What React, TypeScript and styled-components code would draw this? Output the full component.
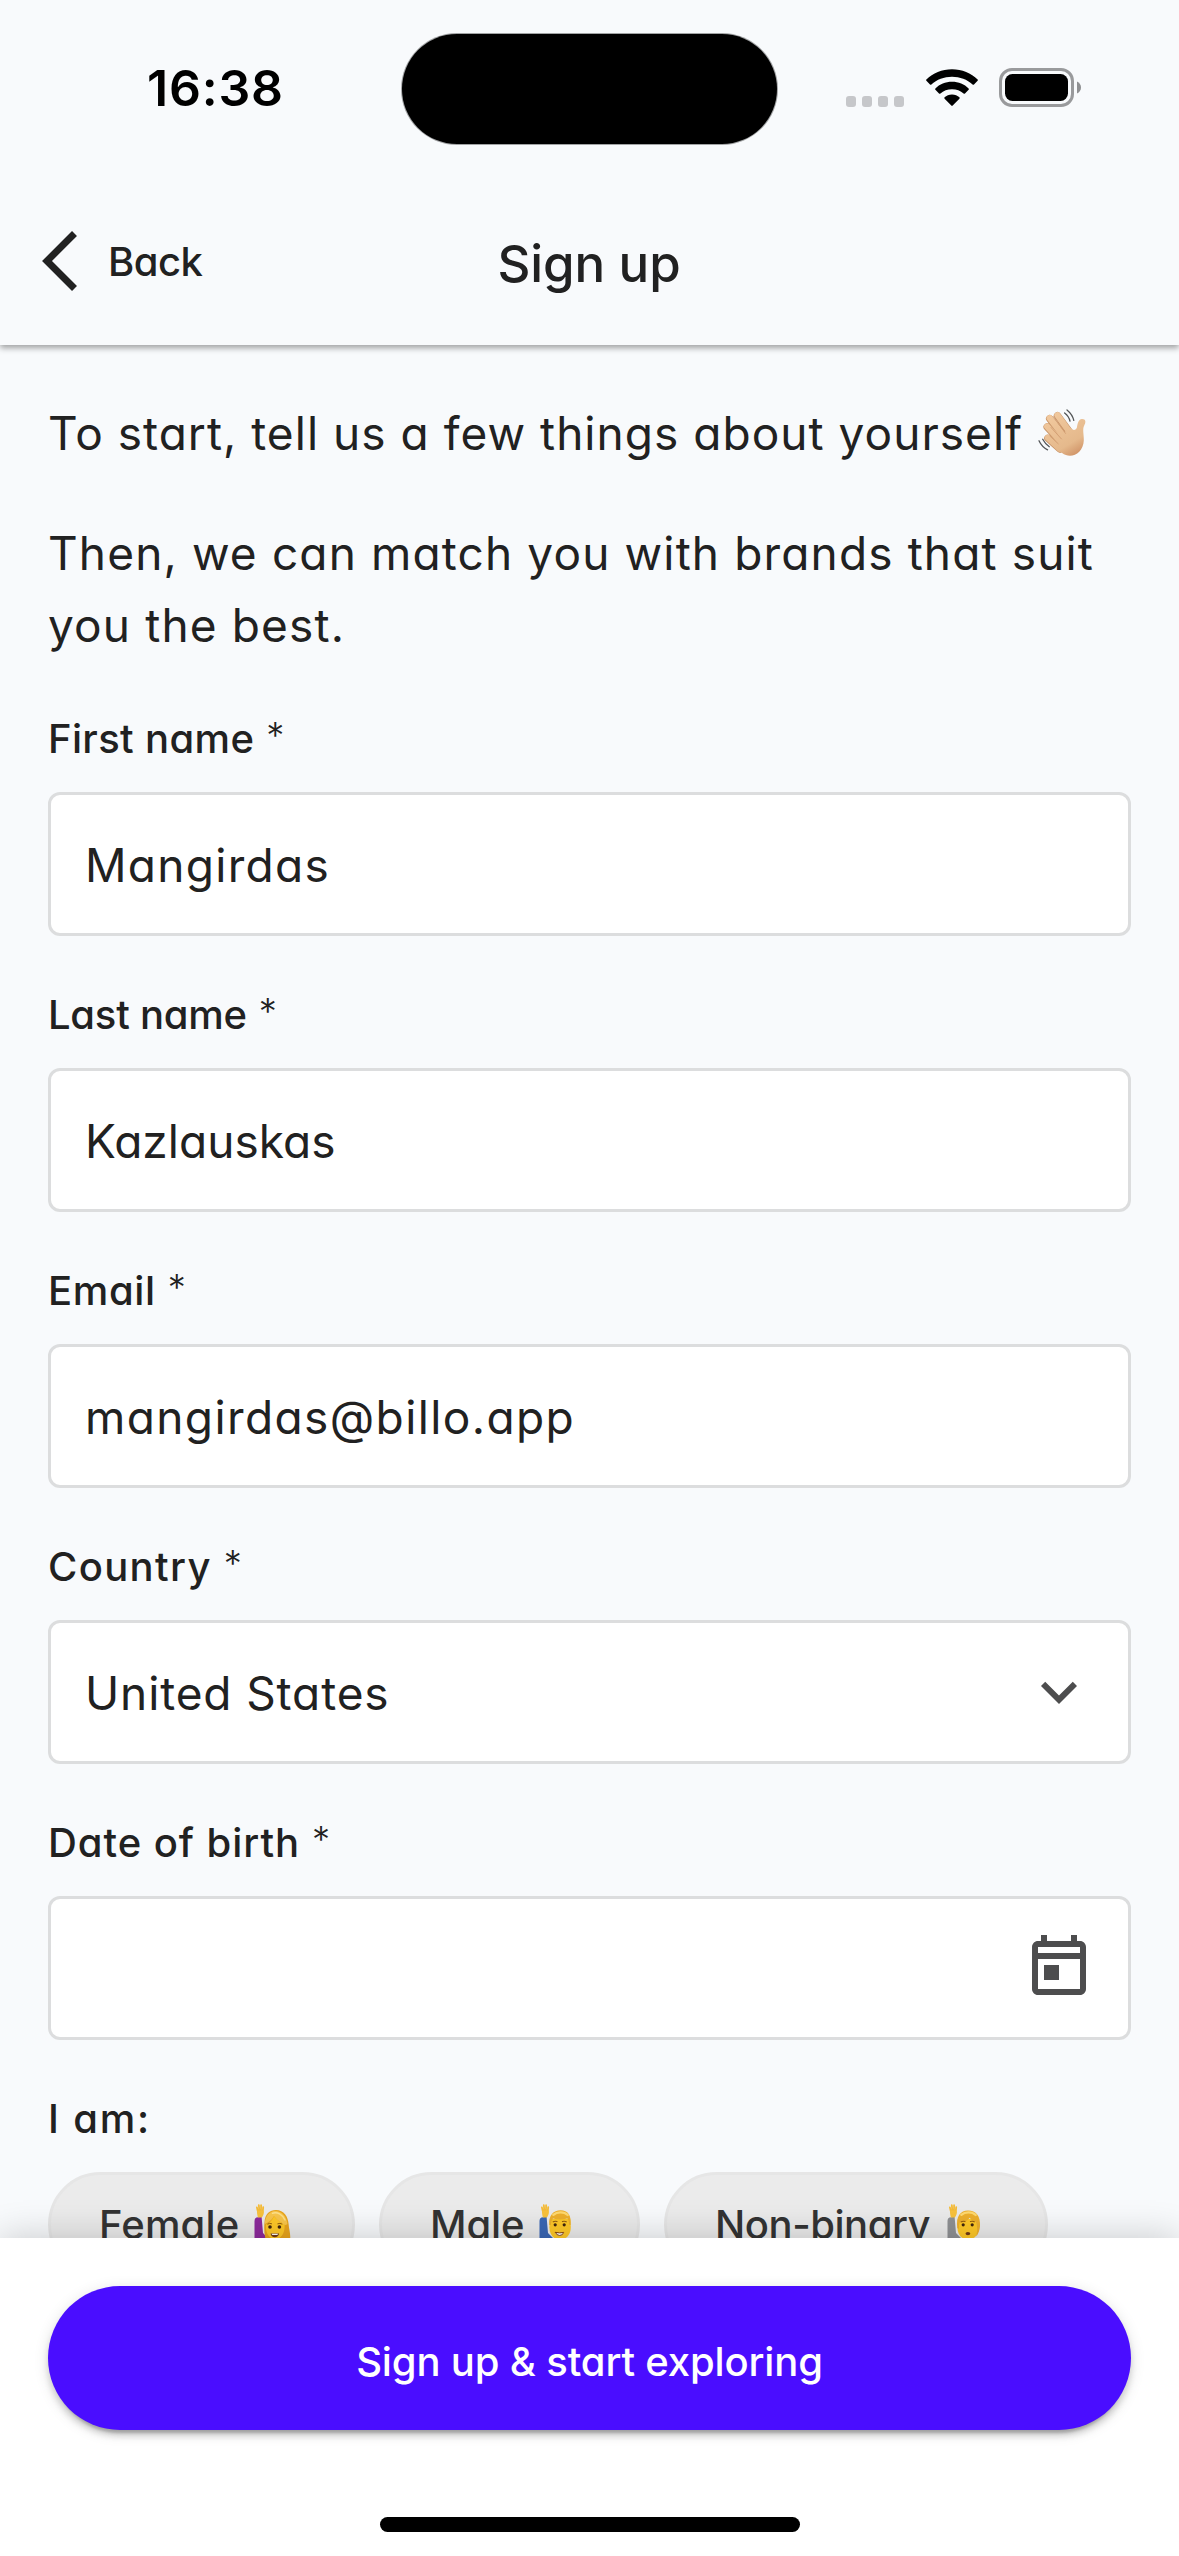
import React from "react";
import styled, { createGlobalStyle } from "styled-components";

const GlobalStyle = createGlobalStyle`
  * { box-sizing: border-box; }
  body {
    margin: 0;
    background: #f8fafc;
    color: #212121;
    font-family: Inter, "Liberation Sans", sans-serif;
    font-feature-settings: "cv11" 1;
    font-kerning: normal;
  }
`;

const Screen = styled.div`
  display: flex;
  flex-direction: column;
  width: 1179px;
  height: 2556px;
  overflow: hidden;
  background: #f8fafc;
`;

const TopArea = styled.header`
  position: relative;
  z-index: 1;
  flex: none;
  height: 345px;
  background: #f8fafc;
  box-shadow: 0 3px 6px rgba(0, 0, 0, 0.36);
`;

const StatusBar = styled.div`
  display: grid;
  grid-template-columns: 402px 375px 1fr;
  height: 177px;
  padding-top: 34px;
`;

const Clock = styled.div`
  padding-left: 147px;
  font-size: 50px;
  font-weight: 600;
  line-height: 111px;
  letter-spacing: 0.8px;
  margin-top: -1px;
  color: #000;
`;

const Island = styled.div`
  height: 110px;
  border-radius: 55px;
  background: #000;
  box-shadow: 0 0 0 1px rgba(0, 0, 0, 0.35);
`;

const StatusIcons = styled.div`
  display: flex;
  align-items: flex-start;
  padding: 34px 0 0 69px;
`;

const SignalDots = styled.div`
  display: flex;
  gap: 6px;
  padding-top: 28px;
`;

const Dot = styled.span`
  width: 10px;
  height: 11px;
  border-radius: 3px;
  background: #c6c7ca;
`;

const Wifi = styled.svg`
  width: 52px;
  height: 38px;
  margin: 1px 0 0 22px;
`;

const Battery = styled.svg`
  width: 84px;
  height: 40px;
  margin-left: 21px;
`;

const NavBar = styled.nav`
  display: grid;
  grid-template-columns: 1fr auto 1fr;
  height: 168px;
`;

const BackButton = styled.button`
  display: flex;
  align-items: flex-start;
  padding: 54px 0 0 42px;
  border: 0;
  background: none;
  color: inherit;
  font: inherit;
  font-feature-settings: inherit;
  font-size: 40px;
  font-weight: 500;
  line-height: 60px;
  letter-spacing: -0.5px;
`;

const BackChevron = styled.svg`
  width: 36px;
  height: 60px;
  margin-right: 30px;
`;

const BackText = styled.span`
  margin-top: 1px;
`;

const Title = styled.h1`
  margin: 0;
  padding: 51px 1px 0 0;
  font-size: 51px;
  font-weight: 500;
  line-height: 72px;
  letter-spacing: -0.1px;
`;

const Content = styled.main`
  flex: 1;
  min-height: 0;
  overflow: hidden;
  padding: 52px 48px 0;
`;

const Intro = styled.p<{ $track: number }>`
  display: flex;
  margin: 0 0 48px;
  font-size: 46px;
  line-height: 72px;
  letter-spacing: ${(p) => p.$track}px;

  &:last-of-type {
    margin-bottom: 47px;
  }
`;

const WaveIcon = styled.svg`
  width: 49px;
  height: 48px;
  margin: 12px 0 0 15px;
`;

const FieldGroup = styled.section`
  margin-bottom: 48px;
`;

const Label = styled.label<{ $track: number }>`
  display: flex;
  gap: 12px;
  height: 60px;
  margin-bottom: 24px;
  font-size: 40px;
  font-weight: 500;
  line-height: 61px;
  letter-spacing: ${(p) => p.$track}px;
`;

const Required = styled.span`
  font-size: 36px;
  font-weight: 300;
  line-height: 55px;
`;

const Field = styled.div<{ $track?: number }>`
  display: flex;
  align-items: center;
  justify-content: space-between;
  height: 144px;
  padding: 2px 33px 0 34px;
  border: 3px solid #dcddde;
  border-radius: 12px;
  background: #fff;
  font-size: 46px;
  line-height: 72px;
  letter-spacing: ${(p) => p.$track ?? 0}px;
`;

const FieldIcon = styled.svg`
  width: 72px;
  height: 72px;
  margin: -2px 0 0 auto;
  fill: #4d4d4e;
`;

const ChipRow = styled.div`
  display: flex;
  gap: 24px;
`;

const Chip = styled.div<{ $width: number; $track: number }>`
  display: flex;
  justify-content: space-between;
  width: ${(p) => p.$width}px;
  height: 105px;
  padding: 0 50px 0 48px;
  border: 3px solid #e6e6e6;
  border-radius: 53px;
  background: #ebebeb;
  color: #333;
  font-size: 40px;
  font-weight: 500;
  line-height: 100px;
  letter-spacing: ${(p) => p.$track}px;
`;

const PersonIcon = styled.svg`
  flex: none;
  width: 48px;
  height: 48px;
  margin-top: 29px;
`;

const Footer = styled.footer`
  position: relative;
  z-index: 1;
  flex: none;
  display: flex;
  flex-direction: column;
  align-items: center;
  height: 318px;
  padding: 48px 48px 0;
  background: #fff;
  box-shadow: 0 0 36px rgba(0, 0, 0, 0.2);
`;

const SubmitButton = styled.button`
  width: 100%;
  height: 144px;
  padding: 7px 0 0;
  border: 0;
  border-radius: 72px;
  background: #4a0dff;
  color: #fff;
  font: inherit;
  font-feature-settings: inherit;
  font-size: 40px;
  font-weight: 500;
  line-height: 60px;
  letter-spacing: -0.15px;
  box-shadow:
    0 9px 3px -6px rgba(0, 0, 0, 0.2),
    0 6px 6px rgba(0, 0, 0, 0.14),
    0 3px 15px rgba(0, 0, 0, 0.12);
`;

const HomeIndicator = styled.div`
  width: 420px;
  height: 15px;
  margin-top: 87px;
  border-radius: 8px;
  background: #000;
`;

function WavingHand() {
  return (
    <WaveIcon viewBox="0 0 49 48" fill="none" strokeLinecap="round">
      <defs>
        <linearGradient id="palm" x1="14" y1="8" x2="38" y2="47" gradientUnits="userSpaceOnUse">
          <stop offset="0" stopColor="#f0c79c" />
          <stop offset="0.7" stopColor="#e5b98c" />
          <stop offset="1" stopColor="#cf9266" />
        </linearGradient>
      </defs>
      <g stroke="#c89468" strokeWidth="7.4">
        <path d="M19.5 6.7 33 25M11.7 9.6 28 30M9.2 18 24 34M9.9 29.3 22 40" />
      </g>
      <g stroke="url(#palm)" strokeWidth="6.2">
        <path d="M19.5 6.3 33 25M11.7 9.1 28 30M9.2 17.5 24 34M9.9 28.8 22 40" />
      </g>
      <path
        fill="url(#palm)"
        d="M16.5 38 22 29 29 20.5 32.7 19Q36.3 23.2 38.8 19C39.6 15.3 40 10.3 44 10.1C48 10 48.1 13.5 46.2 16.5C44.2 20.2 46 25.5 45.8 31.5C45.5 40.8 38.6 46.8 32 46.8C26.4 46.8 21.7 42.4 16.5 38Z"
      />
      <path stroke="#d19c70" strokeWidth="0.9" d="M15.4 7.6 27.5 24.4M13 18.4 23.5 30M12 27.2 20.2 34.7" />
      <g stroke="#535557" strokeWidth="1.3">
        <path d="M29 1C32.4 3.8 34.8 7 35.8 11.4M26.6 4C29.5 6.2 31.3 8.8 32 12.2M1 31.8C2.9 35.9 5.6 38.9 9.6 40.8M4.7 30.2C6.5 33.5 8.5 35.9 11.3 37.7" />
      </g>
    </WaveIcon>
  );
}

type PersonKind = "woman" | "man" | "person";

function RaisingHand({ kind }: { kind: PersonKind }) {
  const sleeve = { woman: "#8d2a9c", man: "#3a67b5", person: "#8f9194" }[kind];
  return (
    <PersonIcon viewBox="0 0 48 48" fill="none" strokeLinecap="round">
      <path fill={sleeve} d="M.5 48V17Q.5 13.5 4 13.3L7.6 12.8 9 29 18 38H34Q38 39 38 48Z" />
      <path stroke="#f5bb36" strokeWidth="1.8" d="M2.9 3.4 4 8M4.8 1.2 5.4 7M7.1 1.2 7 7M9.2 3.2 8.6 9" />
      <path fill="#f8c23c" d="M3 6.6H9.6Q10.2 11 7.8 13.6H3.9Q2.8 10 3 6.6Z" />
      {kind === "woman" ? (
        <>
          <path fill="#e9a51d" d="M10.5 18C11 10 15.5 6 22 6C30 6 34 12.5 34.6 20C35 26 37 30 36 37H12Q9.5 28 10.5 18Z" />
          <path fill="#ffc928" d="M12 20.5C15 19.5 18.5 16 20 12C22.5 16 28 19 30.6 20.5C31 29 27.6 35 21.2 35C14.4 35 11.3 28 12 20.5Z" />
          <path fill="#f9c64b" d="M11 17C13 8.5 18.5 6.5 22.5 7C27.5 7.6 32.6 12 33.4 20Q30.5 22.3 27.6 18.6C25.2 17.3 21.8 14.9 20 12Q17 17.5 11 20Z" />
          <path stroke="#ffe28a" strokeWidth="1.5" d="M18.5 9.2C23.6 7.5 29 11 31 16" />
          <circle cx="16" cy="23" r="1.8" fill="#40260e" />
          <circle cx="25.4" cy="23" r="1.8" fill="#40260e" />
          <path stroke="#96600f" strokeWidth="1" d="M13.7 20Q15.5 18.7 17.6 19.7M23.8 19.7Q26 18.7 28 20" />
          <path fill="#703a18" d="M16.6 29.4H25Q24.4 33.2 20.8 33.2T16.6 29.4Z" />
          <path fill="#fff" d="M17.6 29.8H24L23.5 31H18.1Z" />
        </>
      ) : (
        <>
          <path fill="#ffc928" d="M10.8 15H31.2L31.8 23C31.8 31 27 35.6 21 35.6C15 35.6 10.3 31 10.4 23Z" />
          <path
            fill="#eeb02c"
            d={
              kind === "man"
                ? "M10.3 21C9.4 11 14.5 6.2 21.6 6.2C28.8 6.2 32.6 11 31.6 21H30.3Q30.2 16.5 28.4 14.5Q21 16.7 14 14.5Q12 16.5 11.8 21Z"
                : "M10.4 24C8.6 12 13.6 6.4 21 6.4C29 6.4 33.7 12 33 22C32.8 27 30.6 31 29.2 32.5Q31.2 24 29 18Q25 17.5 22.8 13.8Q18.8 18.8 12.6 18.6Q11.6 21 12 25Z"
            }
          />
          <path stroke="#ffda70" strokeWidth="2.4" d="M14.3 10.8C18 7.6 25 7.4 28.7 11" />
          <circle cx="16.2" cy="20.8" r="1.6" fill="#40260e" />
          <circle cx="25.2" cy="20.8" r="1.6" fill="#40260e" />
          <path stroke="#966010" strokeWidth="1.1" d="M14.2 17.8Q16 16.7 18 17.6M23.4 17.6Q25.4 16.7 27.3 17.8" />
          {kind === "man" ? (
            <path fill="#fff" stroke="#8b4b16" strokeWidth="1" d="M16.5 28.4Q20.6 29.4 24.7 28.4Q23.8 31.5 20.6 31.5T16.5 28.4Z" />
          ) : (
            <ellipse cx="20.9" cy="29.6" rx="2.4" ry="1.7" fill="#703a18" />
          )}
        </>
      )}
    </PersonIcon>
  );
}

const fields = [
  { label: "First name", labelTrack: 0.35, value: "Mangirdas", track: 1.3 },
  { label: "Last name", labelTrack: -0.25, value: "Kazlauskas", track: 0.05 },
  { label: "Email", labelTrack: 0.65, value: "mangirdas@billo.app", track: 1.4 },
  { label: "Country", labelTrack: 1.35, value: "United States", track: 0.88, icon: "M7.41 8.59 12 13.17l4.59-4.58L18 10l-6 6-6-6z" },
  {
    label: "Date of birth",
    labelTrack: 0.95,
    value: "",
    track: 0,
    icon: "M19 3h-1V1h-2v2H8V1H6v2H5c-1.11 0-1.99.9-1.99 2L3 19c0 1.1.89 2 2 2h14c1.1 0 2-.9 2-2V5c0-1.1-.9-2-2-2zm0 16H5V9h14v10zM5 7V5h14v2H5zm2 4h5v5H7z",
  },
];

const chips: { text: string; kind: PersonKind; width: number; track: number }[] = [
  { text: "Female", kind: "woman", width: 307, track: 0.15 },
  { text: "Male", kind: "man", width: 261, track: -0.1 },
  { text: "Non-binary", kind: "person", width: 384, track: -0.45 },
];

export default function App() {
  return (
    <>
      <GlobalStyle />
      <Screen>
        <TopArea>
          <StatusBar>
            <Clock>16:38</Clock>
            <Island />
            <StatusIcons>
              <SignalDots>
                <Dot />
                <Dot />
                <Dot />
                <Dot />
              </SignalDots>
              <Wifi viewBox="0 0 52 38">
                <path d="M26 0.2C36 .2 45.2 4.1 51.6 10.4Q52.3 11.1 51.6 11.8L48 15.4Q47.3 16.1 46.6 15.4C41.2 10.6 34 7.8 26 7.8S10.8 10.6 5.4 15.4Q4.7 16.1 4 15.4L.4 11.8Q-.3 11.1.4 10.4C6.8 4.1 16 .2 26 .2Z" />
                <path d="M26 12.8C32.6 12.8 38.4 15.3 42.6 19.4Q43.3 20.1 42.6 20.8L39 24.4Q38.3 25 37.6 24.4C34.5 21.8 30.5 20.2 26 20.2S17.5 21.8 14.4 24.4Q13.7 25 13 24.4L9.4 20.8Q8.7 20.1 9.4 19.4C13.6 15.3 19.4 12.8 26 12.8Z" />
                <path d="M26 25.4C29 25.4 31.6 26.5 33.4 28.3Q34.1 29 33.4 29.7L26.7 36.6Q26 37.3 25.3 36.6L18.6 29.7Q17.9 29 18.6 28.3C20.4 26.5 23 25.4 26 25.4Z" />
              </Wifi>
              <Battery viewBox="0 0 84 40" fill="none">
                <rect x="1.5" y="1.5" width="72" height="36" rx="11.5" stroke="#999a9c" strokeWidth="3" />
                <rect x="6" y="6" width="63" height="27" rx="7.5" fill="#000" />
                <path d="M78 13.5C80.5 14.6 82 16.8 82 19.5S80.5 24.4 78 25.5Z" fill="#8f9092" />
              </Battery>
            </StatusIcons>
          </StatusBar>
          <NavBar>
            <BackButton>
              <BackChevron viewBox="0 0 36 60" fill="none" stroke="#212121" strokeWidth="7">
                <path d="M32.5 2.5 5 30 32.5 57.5" />
              </BackChevron>
              <BackText>Back</BackText>
            </BackButton>
            <Title>Sign up</Title>
          </NavBar>
        </TopArea>

        <Content>
          <Intro $track={1.03}>
            To start, tell us a few things about yourself
            <WavingHand />
          </Intro>
          <Intro $track={1.14}>
            Then, we can match you with brands that suit
            <br />
            you the best.
          </Intro>

          {fields.map((f) => (
            <FieldGroup key={f.label}>
              <Label $track={f.labelTrack}>
                {f.label}
                <Required>*</Required>
              </Label>
              <Field $track={f.track}>
                {f.value}
                {f.icon && (
                  <FieldIcon viewBox="0 0 24 24">
                    <path d={f.icon} />
                  </FieldIcon>
                )}
              </Field>
            </FieldGroup>
          ))}

          <Label $track={1.8}>I am:</Label>
          <ChipRow>
            {chips.map((c) => (
              <Chip key={c.text} $width={c.width} $track={c.track}>
                {c.text}
                <RaisingHand kind={c.kind} />
              </Chip>
            ))}
          </ChipRow>
        </Content>

        <Footer>
          <SubmitButton>Sign up &amp; start exploring</SubmitButton>
          <HomeIndicator />
        </Footer>
      </Screen>
    </>
  );
}
